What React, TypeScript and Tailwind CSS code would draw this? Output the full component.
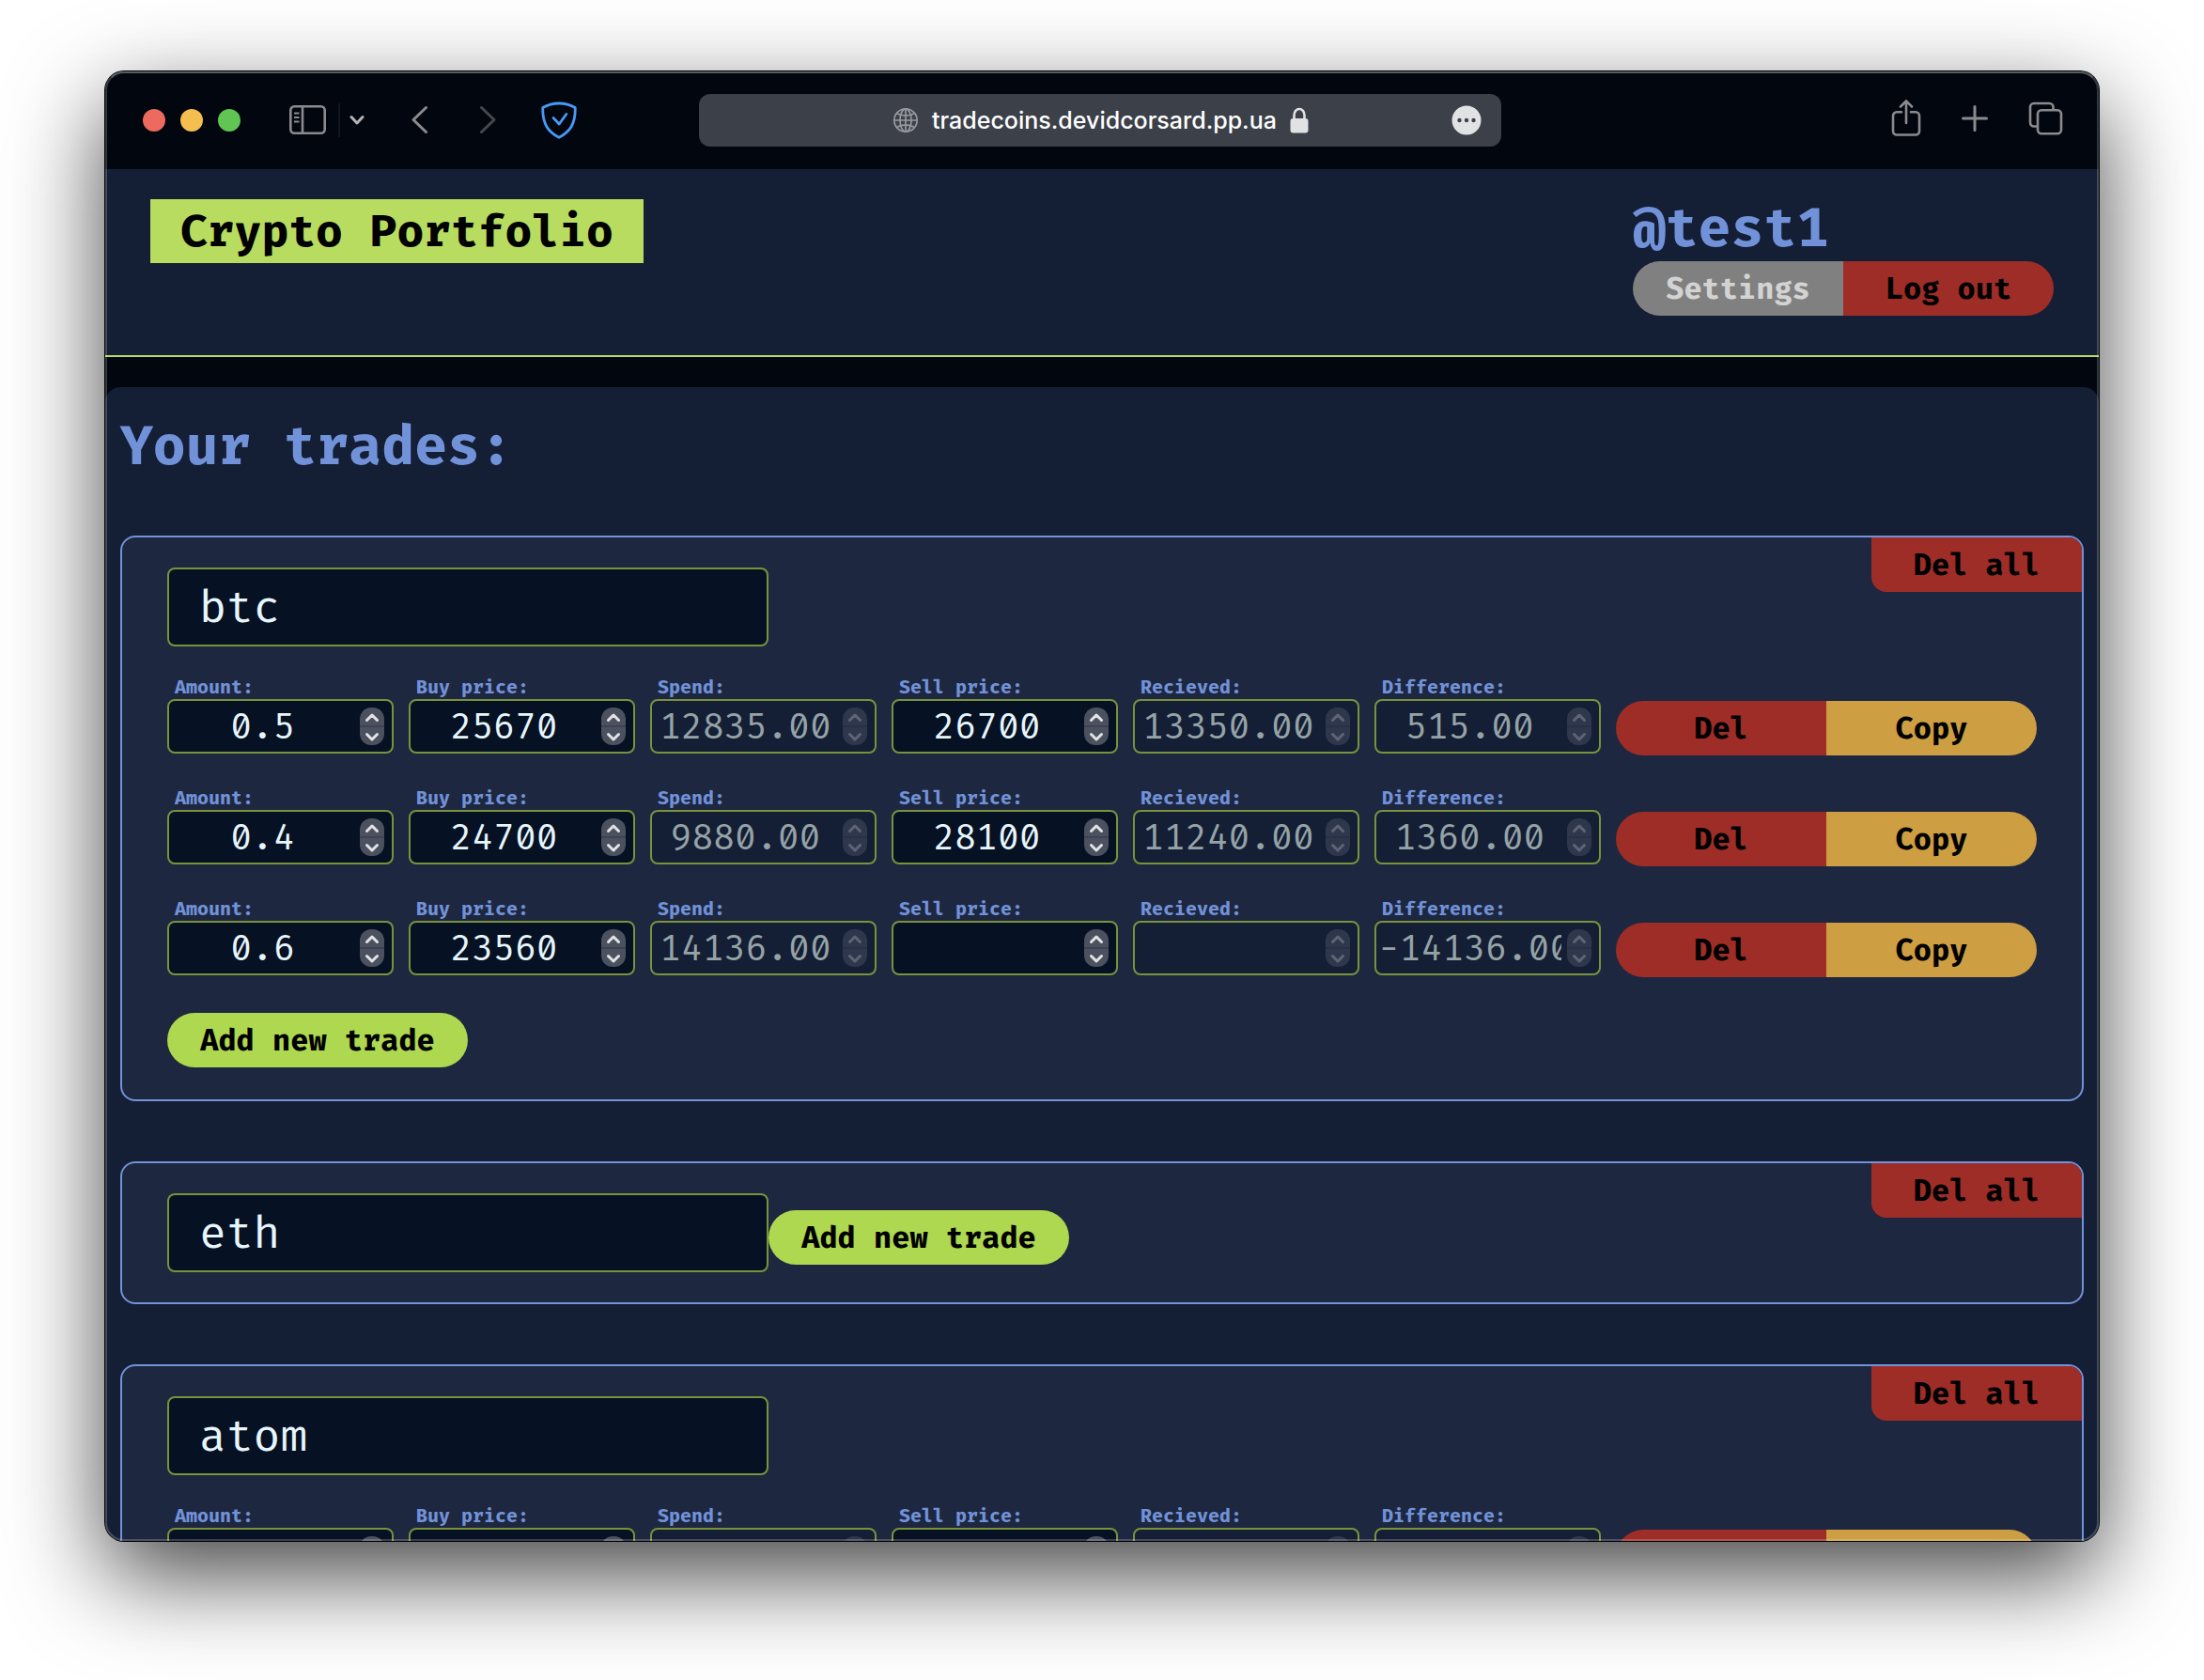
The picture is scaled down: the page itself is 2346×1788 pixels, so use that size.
import React from "react";

type Trade = {
  amount: string;
  buy: string;
  spend: string;
  sell: string;
  received: string;
  difference: string;
};

type Coin = { name: string; trades: Trade[] };

const coins: Coin[] = [
  {
    name: "btc",
    trades: [
      { amount: "0.5", buy: "25670", spend: "12835.00", sell: "26700", received: "13350.00", difference: "515.00" },
      { amount: "0.4", buy: "24700", spend: "9880.00", sell: "28100", received: "11240.00", difference: "1360.00" },
      { amount: "0.6", buy: "23560", spend: "14136.00", sell: "", received: "", difference: "-14136.00" },
    ],
  },
  { name: "eth", trades: [] },
  {
    name: "atom",
    trades: [{ amount: "", buy: "", spend: "", sell: "", received: "", difference: "" }],
  },
];

const fields: { key: keyof Trade; label: string; readOnly: boolean }[] = [
  { key: "amount", label: "Amount:", readOnly: false },
  { key: "buy", label: "Buy price:", readOnly: false },
  { key: "spend", label: "Spend:", readOnly: true },
  { key: "sell", label: "Sell price:", readOnly: false },
  { key: "received", label: "Recieved:", readOnly: true },
  { key: "difference", label: "Difference:", readOnly: true },
];

function Toolbar() {
  return (
    <div className="flex h-[104px] shrink-0 items-center bg-[#02060f] text-[#8b8b8e]">
      <div className="flex w-[632px] shrink-0 items-center pl-10">
        <div className="flex gap-4">
          <button aria-label="Close" className="size-6 rounded-full bg-[#ec6a5e]" />
          <button aria-label="Minimize" className="size-6 rounded-full bg-[#f4bf4f]" />
          <button aria-label="Zoom" className="size-6 rounded-full bg-[#61c554]" />
        </div>
        <button aria-label="Sidebar" className="ml-[52px]">
          <svg width="39" height="34" viewBox="0 0 39 34" fill="none" stroke="currentColor" strokeWidth="2.6">
            <rect x="1.3" y="2.3" width="36.4" height="28.4" rx="4" />
            <path d="M14 2.5v28" />
            <path d="M5 9.5h5.5M5 14h5.5M5 18.500h5.500" strokeWidth="1.800" />
          </svg>
        </button>
        <div className="ml-[13px] h-9 w-0.5 bg-[#12161f]" />
        <button aria-label="Tab groups" className="ml-2.5">
          <svg width="16" height="12" viewBox="0 0 16 12" fill="none" stroke="#b4b4b6" strokeWidth="3" strokeLinecap="round" strokeLinejoin="round">
            <path d="M2 2.500l6 6.500 6-6.500" />
          </svg>
        </button>
        <button aria-label="Back" className="ml-[50px]">
          <svg width="18" height="32" viewBox="0 0 18 32" fill="none" stroke="currentColor" strokeWidth="3" strokeLinecap="round" strokeLinejoin="round">
            <path d="M15.500 2.500L2 15.500l13.500 13" />
          </svg>
        </button>
        <button aria-label="Forward" className="ml-[54px] text-[#46484e]">
          <svg width="18" height="32" viewBox="0 0 18 32" fill="none" stroke="currentColor" strokeWidth="3" strokeLinecap="round" strokeLinejoin="round">
            <path d="M2.500 2.500L16 15.500l-13.500 13" />
          </svg>
        </button>
        <button aria-label="Content blocker" className="ml-12">
          <svg width="38" height="40" viewBox="0 0 38 40" fill="none" stroke="#469bf7" strokeWidth="2.800" strokeLinecap="round" strokeLinejoin="round">
            <path d="M19 2C13 2 7 3.500 1.800 6.500C1.500 14 2.500 21 6 27C9 32 13.500 35.500 19 38.300C24.500 35.500 29 32 32 27C35.500 21 36.500 14 36.200 6.500C31 3.500 25 2 19 2Z" />
            <path d="M13 17.500l6.200 6.500 7.600-10.500" />
          </svg>
        </button>
      </div>
      <div className="flex h-14 min-w-0 flex-1 items-center rounded-xl bg-[#3c4049] pr-[21px]">
        <div className="flex flex-1 items-center justify-center gap-3.5 pl-[54px]">
          <svg width="28" height="28" viewBox="0 0 28 28" fill="none" stroke="#97999f" strokeWidth="1.700">
            <circle cx="14" cy="14" r="12.200" />
            <ellipse cx="14" cy="14" rx="6" ry="12.200" />
            <path d="M14 1.800v24.400M1.800 14h24.400M4.500 6.500c5.500 3.600 13.500 3.600 19 0M4.500 21.500c5.500-3.600 13.500-3.600 19 0" />
          </svg>
          <span className="font-['Inter',sans-serif] text-[25px] leading-8 font-medium text-white">tradecoins.devidcorsard.pp.ua</span>
          <svg width="20" height="28" viewBox="0 0 20 28">
            <path d="M4.500 14V8.500a5.500 6.500 0 0 1 11 0V14" fill="none" stroke="#e1e2e4" strokeWidth="2.600" />
            <rect x="0.500" y="12" width="19" height="15.500" rx="3" fill="#e1e2e4" />
          </svg>
        </div>
        <button aria-label="Page menu">
          <svg width="32" height="32" viewBox="0 0 32 32">
            <circle cx="16" cy="16" r="15.500" fill="#e1e2e4" />
            <g fill="#3c4049">
              <circle cx="8.500" cy="16" r="2.200" />
              <circle cx="16" cy="16" r="2.200" />
              <circle cx="23.500" cy="16" r="2.200" />
            </g>
          </svg>
        </button>
      </div>
      <div className="flex w-[636px] shrink-0 items-center justify-end gap-[43px] pr-[38px] pb-1">
        <button aria-label="Share">
          <svg width="32" height="42" viewBox="0 0 32 42" fill="none" stroke="currentColor" strokeWidth="2.600" strokeLinecap="round" strokeLinejoin="round">
            <path d="M11 14.300H6a4 4 0 0 0-4 4V34.500a4 4 0 0 0 4 4H26a4 4 0 0 0 4-4V18.300a4 4 0 0 0-4-4H21" />
            <path d="M16 26V3M10 8.500l6-6 6 6" />
          </svg>
        </button>
        <button aria-label="New tab">
          <svg width="28" height="28" viewBox="0 0 28 28" fill="none" stroke="currentColor" strokeWidth="3" strokeLinecap="round">
            <path d="M14 1.500v25M1.500 14h25" />
          </svg>
        </button>
        <button aria-label="Show tabs">
          <svg width="37" height="36" viewBox="0 0 37 36" fill="none" stroke="currentColor" strokeWidth="2.600" strokeLinejoin="round">
            <rect x="10" y="9.300" width="25" height="25" rx="4" />
            <path d="M9.500 26.500H6a4 4 0 0 1-4-4V6a4 4 0 0 1 4-4H22.500a4 4 0 0 1 4 4V9" />
          </svg>
        </button>
      </div>
    </div>
  );
}

function Spinner({ disabled }: { disabled: boolean }) {
  const tone = disabled ? "bg-[#2f374c] text-[#5d6575]" : "bg-[#4c515f] text-[#e2e3e5]";
  const line = disabled ? "border-[#283046]" : "border-[#3e4351]";
  return (
    <div className={"mr-2 ml-1.5 flex h-10 w-[26px] shrink-0 flex-col overflow-hidden rounded-xl " + tone}>
      <button disabled={disabled} aria-label="Increase" className={"flex flex-1 items-center justify-center border-b-2 " + line}>
        <svg width="18" height="12" viewBox="0 0 18 12" fill="none" stroke="currentColor" strokeWidth="3" strokeLinecap="round" strokeLinejoin="round">
          <path d="M3.500 9.500L9 4l5.500 5.500" />
        </svg>
      </button>
      <button disabled={disabled} aria-label="Decrease" className="flex flex-1 items-center justify-center">
        <svg width="18" height="12" viewBox="0 0 18 12" fill="none" stroke="currentColor" strokeWidth="3" strokeLinecap="round" strokeLinejoin="round">
          <path d="M3.500 3.500L9 9l5.500-5.500" />
        </svg>
      </button>
    </div>
  );
}

function NumberField({ id, label, value, readOnly }: { id: string; label: string; value: string; readOnly: boolean }) {
  return (
    <div className="flex min-w-0 flex-1 flex-col pb-0.5">
      <label htmlFor={id} className="mb-0.5 pl-2 text-[20px] leading-[22px] font-bold text-[#7192d8]">
        {label}
      </label>
      <div
        className={
          "flex h-[58px] items-center rounded-lg border-2 border-[#79923c] pl-0.5 " +
          (readOnly ? "bg-[#141e35] text-[#95a3a6]" : "bg-[#061124] text-[#e6f6fb]")
        }
      >
        <input
          id={id}
          type="number"
          step="any"
          defaultValue={value}
          disabled={readOnly}
          className="h-full w-0 min-w-0 flex-1 bg-transparent text-center text-[38px] slashed-zero outline-none [appearance:textfield] [&::-webkit-inner-spin-button]:appearance-none"
        />
        <Spinner disabled={readOnly} />
      </div>
    </div>
  );
}

function TradeRow({ coin, index, trade }: { coin: string; index: number; trade: Trade }) {
  return (
    <div className="flex items-end gap-4">
      {fields.map((f) => (
        <NumberField key={f.key} id={`${coin}-${index}-${f.key}`} label={f.label} value={trade[f.key]} readOnly={f.readOnly} />
      ))}
      <div className="flex h-[58px] shrink-0 overflow-hidden rounded-full text-[32px] font-bold text-black">
        <button className="w-56 bg-[#9e2d27]">Del</button>
        <button className="w-56 bg-[#cd9e42]">Copy</button>
      </div>
    </div>
  );
}

function AddButton() {
  return <button className="h-[58px] w-80 shrink-0 rounded-full bg-[#aed84f] text-[32px] font-bold text-black">Add new trade</button>;
}

function CoinCard({ coin }: { coin: Coin }) {
  const nameInput = (
    <input
      aria-label="Coin name"
      defaultValue={coin.name}
      className="block h-[84px] w-[640px] rounded-lg border-2 border-[#79923c] bg-[#061124] px-8 text-[48px] text-[#e6f6fb] outline-none"
    />
  );
  return (
    <section className="relative shrink-0 overflow-hidden rounded-2xl border-2 border-[#7192d8] bg-[#1e2740] px-12 py-8">
      <button className="absolute top-0 right-0 h-[58px] w-56 rounded-bl-2xl bg-[#9e2d27] text-[32px] font-bold text-black">Del all</button>
      {coin.trades.length === 0 ? (
        <div className="flex items-end">
          {nameInput}
          <div className="mb-2 flex">
            <AddButton />
          </div>
        </div>
      ) : (
        <>
          {nameInput}
          <div className="mt-8 mb-[38px] flex flex-col gap-[34px]">
            {coin.trades.map((t, i) => (
              <TradeRow key={i} coin={coin.name} index={i} trade={t} />
            ))}
          </div>
          <div className="mb-0.5 flex">
            <AddButton />
          </div>
        </>
      )}
    </section>
  );
}

export default function App() {
  return (
    <div className="h-screen overflow-hidden bg-white px-28 pt-[76px] pb-[148px] font-['Fira_Mono','DejaVu_Sans_Mono',monospace]">
      <div className="relative h-full rounded-[20px] shadow-[0_0_0_1px_#000,0_36px_100px_rgba(0,0,0,0.74)]">
        <div className="flex h-full flex-col overflow-hidden rounded-[20px] bg-[#02060f]">
          <Toolbar />
          <header className="flex shrink-0 items-start justify-between border-b-2 border-[#b8dc60] bg-[#141e35] px-12 pt-8 pb-[42px]">
            <h1 className="bg-[#b8dc60] px-8 text-[48px] leading-[68px] font-bold text-black">Crypto Portfolio</h1>
            <div>
              <p className="mb-1 text-[58px] leading-[62px] font-bold text-[#7192d8]">@test1</p>
              <div className="flex h-[58px] overflow-hidden rounded-full text-[32px] font-bold">
                <button className="w-56 bg-[#808080] text-[#d3d3d3]">Settings</button>
                <button className="w-56 bg-[#9e2d27] text-black">Log out</button>
              </div>
            </div>
          </header>
          <main className="mt-8 flex min-h-0 flex-1 flex-col gap-16 overflow-hidden rounded-t-2xl bg-[#141e35] px-4 pt-8">
            <h2 className="text-[58px] leading-[62px] font-bold text-[#7192d8]">Your trades:</h2>
            {coins.map((c) => (
              <CoinCard key={c.name} coin={c} />
            ))}
          </main>
        </div>
        <div className="pointer-events-none absolute inset-0 rounded-[20px] border-2 border-white/20 border-t-white/35" />
      </div>
    </div>
  );
}
